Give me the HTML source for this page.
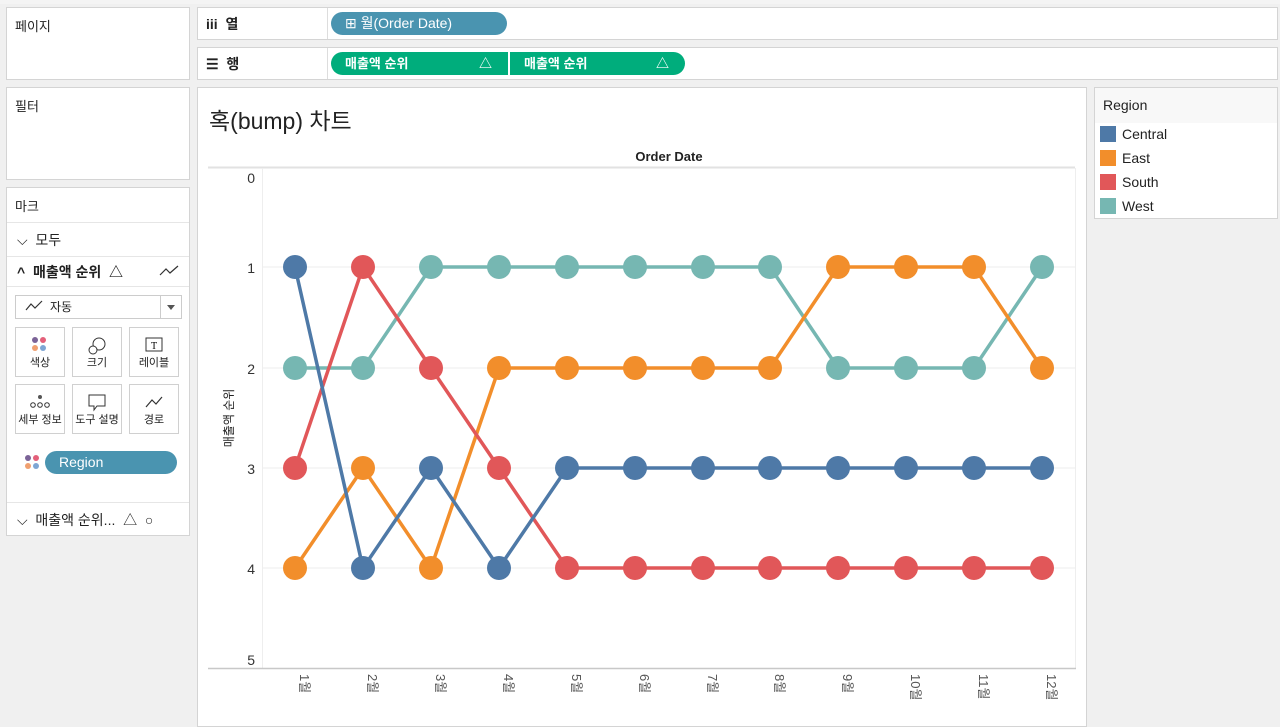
<!DOCTYPE html>
<html><head><meta charset="utf-8"><style>
*{box-sizing:border-box;margin:0;padding:0}
body{width:1280px;height:716px;background:#f0f0f0;font-family:"Liberation Sans","Noto Sans CJK KR",sans-serif;font-size:13px;color:#222;position:relative;overflow:hidden}
.p{position:absolute;background:#fff;border:1px solid #d4d4d4}
.a{position:absolute}
.pill{position:absolute;height:23px;border-radius:12px;color:#fff;font-size:14px;line-height:23px;padding-left:14px}
.mb{position:absolute;width:50px;height:50px;border:1px solid #d0d0d0;background:#fff;font-size:11px;text-align:center}
.mb span{position:absolute;left:0;right:0;bottom:6px}
.sep{position:absolute;left:0;right:0;height:1px;background:#e6e6e6}
</style></head><body>
<div class="a" style="left:0;top:0;width:1280px;height:4px;background:#f4f4f4"></div>
<div class="p" style="left:6px;top:7px;width:184px;height:73px"><div class="a" style="left:8px;top:8px">페이지</div></div>
<div class="p" style="left:6px;top:87px;width:184px;height:93px"><div class="a" style="left:8px;top:8px">필터</div></div>
<div class="p" style="left:6px;top:187px;width:184px;height:349px">
 <div class="a" style="left:8px;top:8px">마크</div>
 <div class="sep" style="top:34px"></div>
 <div class="a" style="left:10px;top:42px;font-size:14px">⌵&nbsp; 모두</div>
 <div class="sep" style="top:68px"></div>
 <div class="a" style="left:10px;top:74px;font-size:14px;font-weight:bold">^&nbsp; 매출액 순위 &nbsp;△</div>
 <svg class="a" style="left:152px;top:76px" width="20" height="14"><polyline points="1,11 7,5 11,9 19,2" fill="none" stroke="#333" stroke-width="1.2"/></svg>
 <div class="sep" style="top:98px"></div>
 <div class="a" style="left:8px;top:107px;width:167px;height:24px;border:1px solid #ccc;background:#fff;font-size:12px;line-height:22px;padding-left:34px">자동</div>
 <svg class="a" style="left:18px;top:112px" width="18" height="12"><polyline points="1,10 6,4 10,8 17,1" fill="none" stroke="#333" stroke-width="1.2"/></svg>
 <div class="a" style="left:153px;top:108px;width:1px;height:22px;background:#ccc"></div>
 <div class="a" style="left:160px;top:117px;border:4px solid transparent;border-top:5px solid #555"></div>
 <div class="mb" style="left:8px;top:139px"><svg width="20" height="20" style="margin-top:8px"><circle cx="5" cy="4" r="3" fill="#7b6397"/><circle cx="13" cy="4" r="3" fill="#e4607a"/><circle cx="5" cy="12" r="3" fill="#f0a070"/><circle cx="13" cy="12" r="3" fill="#7ea6d4"/></svg><span>색상</span></div>
 <div class="mb" style="left:65px;top:139px"><svg width="20" height="20" style="margin-top:8px"><circle cx="12" cy="8" r="6" fill="none" stroke="#333"/><circle cx="6" cy="14" r="4" fill="#fff" stroke="#333"/></svg><span>크기</span></div>
 <div class="mb" style="left:122px;top:139px"><svg width="20" height="20" style="margin-top:8px"><rect x="2" y="2" width="16" height="13" fill="none" stroke="#333"/><text x="10" y="13" font-size="10" text-anchor="middle" font-family="Liberation Serif">T</text></svg><span>레이블</span></div>
 <div class="mb" style="left:8px;top:196px"><svg width="22" height="20" style="margin-top:8px"><circle cx="11" cy="4" r="2" fill="#555"/><circle cx="4" cy="12" r="2.3" fill="none" stroke="#333"/><circle cx="11" cy="12" r="2.3" fill="none" stroke="#333"/><circle cx="18" cy="12" r="2.3" fill="none" stroke="#333"/></svg><span>세부 정보</span></div>
 <div class="mb" style="left:65px;top:196px"><svg width="20" height="20" style="margin-top:8px"><path d="M2 2H18V13H10L7 17V13H2Z" fill="none" stroke="#333"/></svg><span>도구 설명</span></div>
 <div class="mb" style="left:122px;top:196px"><svg width="20" height="20" style="margin-top:8px"><polyline points="2,14 8,7 12,11 18,4" fill="none" stroke="#333" stroke-width="1.2"/></svg><span>경로</span></div>
 <svg class="a" style="left:17px;top:266px" width="18" height="18"><circle cx="4" cy="4" r="3" fill="#7b6397"/><circle cx="12" cy="4" r="3" fill="#e4607a"/><circle cx="4" cy="12" r="3" fill="#f0a070"/><circle cx="12" cy="12" r="3" fill="#7ea6d4"/></svg>
 <div class="pill" style="left:38px;top:263px;width:132px;background:#4a94b0">Region</div>
 <div class="sep" style="top:314px"></div>
 <div class="a" style="left:10px;top:322px;font-size:14px">⌵&nbsp; 매출액 순위... &nbsp;△ &nbsp;○</div>
</div>
<div class="p" style="left:197px;top:7px;width:1081px;height:33px">
 <div class="a" style="left:8px;top:6px;font-size:14px;font-weight:bold">iii&nbsp; 열</div>
 <div class="a" style="left:129px;top:0;width:1px;height:31px;background:#ddd"></div>
 <div class="pill" style="left:133px;top:4px;width:176px;background:#4a94b0">⊞ 월(Order Date)</div>
</div>
<div class="p" style="left:197px;top:47px;width:1081px;height:33px">
 <div class="a" style="left:8px;top:6px;font-size:14px;font-weight:bold">☰&nbsp; 행</div>
 <div class="a" style="left:129px;top:0;width:1px;height:31px;background:#ddd"></div>
 <div class="pill" style="left:133px;top:4px;width:177px;background:#00ad7c;border-radius:12px 0 0 12px;font-weight:bold;font-size:13px">매출액 순위<span style="position:absolute;right:16px">△</span></div>
 <div class="pill" style="left:312px;top:4px;width:175px;background:#00ad7c;border-radius:0 12px 12px 0;font-weight:bold;font-size:13px">매출액 순위<span style="position:absolute;right:16px">△</span></div>
</div>
<div class="p" style="left:197px;top:87px;width:890px;height:640px">
 <div class="a" style="left:11px;top:14px;font-size:23px;color:#222">혹(bump) 차트</div>
</div>
<div class="p" style="left:1094px;top:87px;width:184px;height:132px">
 <div class="a" style="left:0;top:0;right:0;height:35px;background:#f8f8f8"></div>
 <div class="a" style="left:8px;top:9px;font-size:14px">Region</div>
 <div class="a" style="left:5px;top:38px;width:16px;height:16px;background:#4e79a7"></div><div class="a" style="left:27px;top:38px;font-size:14px">Central</div>
 <div class="a" style="left:5px;top:62px;width:16px;height:16px;background:#f28e2b"></div><div class="a" style="left:27px;top:62px;font-size:14px">East</div>
 <div class="a" style="left:5px;top:86px;width:16px;height:16px;background:#e15759"></div><div class="a" style="left:27px;top:86px;font-size:14px">South</div>
 <div class="a" style="left:5px;top:110px;width:16px;height:16px;background:#76b7b2"></div><div class="a" style="left:27px;top:110px;font-size:14px">West</div>
</div>
<svg class="a" style="left:0;top:0" width="1280" height="716" font-family="Liberation Sans,Noto Sans CJK KR,sans-serif">
 <line x1="208" y1="167.5" x2="1075" y2="167.5" stroke="#e2e2e2" stroke-width="2"/>
 <text x="669" y="161" font-size="13" font-weight="bold" text-anchor="middle" fill="#222">Order Date</text>
 <g stroke="#eee" stroke-width="1">
  <line x1="262" y1="267" x2="1075" y2="267"/><line x1="262" y1="368" x2="1075" y2="368"/><line x1="262" y1="468" x2="1075" y2="468"/><line x1="262" y1="568" x2="1075" y2="568"/>
  <line x1="262.5" y1="168" x2="262.5" y2="668"/><line x1="1075.5" y1="168" x2="1075.5" y2="668"/>
 </g>
 <line x1="208" y1="668.5" x2="1076" y2="668.5" stroke="#c8c8c8" stroke-width="1.5"/>
 <g font-size="14" fill="#333" text-anchor="end">
  <text x="255" y="183">0</text><text x="255" y="273">1</text><text x="255" y="374">2</text><text x="255" y="474">3</text><text x="255" y="574">4</text><text x="255" y="665">5</text>
 </g>
 <text transform="translate(233,418) rotate(-90)" font-size="12" text-anchor="middle" fill="#222">매출액 순위</text>
 <g font-size="13" fill="#555">
  <text transform="translate(300,674) rotate(90)">1월</text><text transform="translate(368,674) rotate(90)">2월</text><text transform="translate(436,674) rotate(90)">3월</text><text transform="translate(504,674) rotate(90)">4월</text><text transform="translate(572,674) rotate(90)">5월</text><text transform="translate(640,674) rotate(90)">6월</text><text transform="translate(708,674) rotate(90)">7월</text><text transform="translate(775,674) rotate(90)">8월</text><text transform="translate(843,674) rotate(90)">9월</text><text transform="translate(911,674) rotate(90)">10월</text><text transform="translate(979,674) rotate(90)">11월</text><text transform="translate(1047,674) rotate(90)">12월</text>
 </g>
 <g fill="none" stroke-width="3.5">
  <polyline stroke="#76b7b2" points="295,368 363,368 431,267 499,267 567,267 635,267 703,267 770,267 838,368 906,368 974,368 1042,267"/>
  <polyline stroke="#f28e2b" points="295,568 363,468 431,568 499,368 567,368 635,368 703,368 770,368 838,267 906,267 974,267 1042,368"/>
  <polyline stroke="#e15759" points="295,468 363,267 431,368 499,468 567,568 635,568 703,568 770,568 838,568 906,568 974,568 1042,568"/>
  <polyline stroke="#4e79a7" points="295,267 363,568 431,468 499,568 567,468 635,468 703,468 770,468 838,468 906,468 974,468 1042,468"/>
 </g>
 <g fill="#76b7b2"><circle cx="295" cy="368" r="12"/><circle cx="363" cy="368" r="12"/><circle cx="431" cy="267" r="12"/><circle cx="499" cy="267" r="12"/><circle cx="567" cy="267" r="12"/><circle cx="635" cy="267" r="12"/><circle cx="703" cy="267" r="12"/><circle cx="770" cy="267" r="12"/><circle cx="838" cy="368" r="12"/><circle cx="906" cy="368" r="12"/><circle cx="974" cy="368" r="12"/><circle cx="1042" cy="267" r="12"/></g>
 <g fill="#f28e2b"><circle cx="295" cy="568" r="12"/><circle cx="363" cy="468" r="12"/><circle cx="431" cy="568" r="12"/><circle cx="499" cy="368" r="12"/><circle cx="567" cy="368" r="12"/><circle cx="635" cy="368" r="12"/><circle cx="703" cy="368" r="12"/><circle cx="770" cy="368" r="12"/><circle cx="838" cy="267" r="12"/><circle cx="906" cy="267" r="12"/><circle cx="974" cy="267" r="12"/><circle cx="1042" cy="368" r="12"/></g>
 <g fill="#e15759"><circle cx="295" cy="468" r="12"/><circle cx="363" cy="267" r="12"/><circle cx="431" cy="368" r="12"/><circle cx="499" cy="468" r="12"/><circle cx="567" cy="568" r="12"/><circle cx="635" cy="568" r="12"/><circle cx="703" cy="568" r="12"/><circle cx="770" cy="568" r="12"/><circle cx="838" cy="568" r="12"/><circle cx="906" cy="568" r="12"/><circle cx="974" cy="568" r="12"/><circle cx="1042" cy="568" r="12"/></g>
 <g fill="#4e79a7"><circle cx="295" cy="267" r="12"/><circle cx="363" cy="568" r="12"/><circle cx="431" cy="468" r="12"/><circle cx="499" cy="568" r="12"/><circle cx="567" cy="468" r="12"/><circle cx="635" cy="468" r="12"/><circle cx="703" cy="468" r="12"/><circle cx="770" cy="468" r="12"/><circle cx="838" cy="468" r="12"/><circle cx="906" cy="468" r="12"/><circle cx="974" cy="468" r="12"/><circle cx="1042" cy="468" r="12"/></g>
</svg>
</body></html>
